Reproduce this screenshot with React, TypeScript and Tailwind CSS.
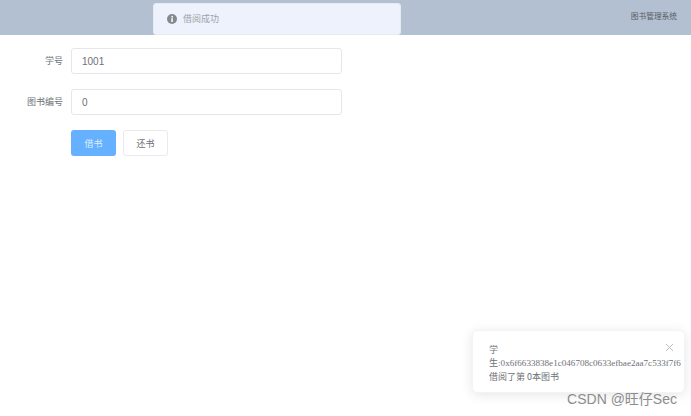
const font = "font-['Noto_Sans_CJK_SC','Liberation_Sans',sans-serif]"

function Field({ label, value }: { label: string; value: string }) {
    return (
        <div className="flex items-center h-[26px] mb-[15px]">
            <label className="w-[63px] text-right text-[9px] text-[#6e7177] shrink-0">{label}</label>
            <div className="ml-2 w-[271px] h-[26px] flex items-center px-[10px] bg-white border border-[#e4e7ed] rounded-[3px] text-[10px] text-[#6e7177] font-['Liberation_Sans',sans-serif]">
                {value}
            </div>
        </div>
    )
}

export default function App() {
    return (
        <div className={`${font} relative w-[691px] h-[416px] overflow-hidden bg-white`}>
            <header className="h-[35px] bg-[#b3c0d1] flex items-center justify-end pr-[14px] pb-[4px] text-[7.7px] text-[#565c64]">
                图书管理系统
            </header>

            <div className="absolute left-[153px] top-[3px] w-[248px] h-[32px] bg-[#edf2fc] border border-[#e6eaf3] rounded-[3px] flex items-center pl-[13px]">
                <svg width="10" height="10" viewBox="0 0 10 10" className="shrink-0">
                    <circle cx="5" cy="5" r="5" fill="#85888f" />
                    <rect x="4.3" y="4.2" width="1.5" height="3.8" fill="#fff" />
                    <circle cx="5.2" cy="2.7" r="0.9" fill="#fff" />
                </svg>
                <span className="ml-[6px] text-[9px] text-[#a0a3a9]">借阅成功</span>
            </div>

            <main className="pt-[13px]">
                <Field label="学号" value="1001" />
                <Field label="图书编号" value="0" />
                <div className="flex ml-[71px] gap-[7px]">
                    <button className="w-[45px] h-[26px] pt-[1px] bg-[#66b1ff] rounded-[3px] text-[9px] text-[#dcedff]">借书</button>
                    <button className="w-[45px] h-[26px] pt-[1px] bg-white border border-[#e8eaee] rounded-[3px] text-[9px] text-[#6e7177]">还书</button>
                </div>
            </main>

            <div className="absolute left-[472px] top-[330px] w-[213px] h-[63px] bg-white rounded-[5px] border border-[#f3f4f6] shadow-[0_2px_12px_rgba(0,0,0,0.1)] pl-[16px] pt-[12px] text-[9px] leading-[13.5px] text-[#6e7177]">
                <p>学</p>
                <p className="whitespace-nowrap font-['Liberation_Serif','Noto_Sans_CJK_SC',serif] text-[9.1px]">生:0x6f6633838e1c046708c0633efbae2aa7c533f7f6</p>
                <p>借阅了第 0本图书</p>
                <svg width="9" height="9" viewBox="0 0 9 9" className="absolute right-[10px] top-[12px]" stroke="#b4b7bd" strokeWidth="0.9">
                    <path d="M1 1l7 7M8 1l-7 7" />
                </svg>
            </div>

            <div className="absolute right-[14px] top-[391px] text-[14px] leading-[17px] text-[#8c8c8c] font-['Liberation_Sans','Noto_Sans_CJK_SC',sans-serif]">
                CSDN @旺仔Sec
            </div>
        </div>
    )
}
